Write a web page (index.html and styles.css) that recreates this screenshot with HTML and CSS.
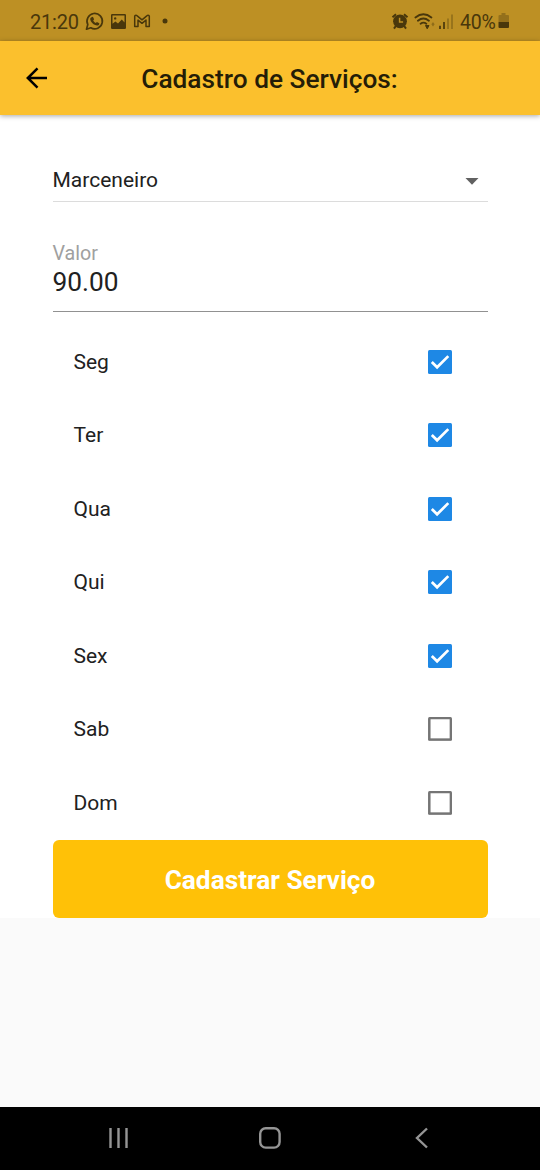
FILE: index.html
```html
<!DOCTYPE html>
<html lang="pt-BR">
<head>
<meta charset="utf-8">
<title>Cadastro de Serviços</title>
<link rel="stylesheet" href="styles.css">
</head>
<body>
<div class="status">
  <span class="clock">21:20</span>
  <svg class="notifications" width="90" height="20" viewBox="84 11 90 20" fill="none" stroke="currentColor">
    <path d="M86.500 29.200l1.300-4.600a7.700 7.700 0 1 1 3 3.200z" stroke-width="1.700" stroke-linejoin="round"/>
    <path d="M91.600 17.200l1.300-.4 1.200 2.500-.9 1.200c.6 1.200 1.400 2 2.600 2.600l1.100-1 2.400 1.200c.2 1.400-1 2.300-2.100 2.300-3.400-.3-6.800-3.700-7-6.600 0-.8.6-1.500 1.400-1.800z" fill="currentColor" stroke="none"/>
    <path fill-rule="evenodd" d="M112.200 14h12.600q1.200 0 1.200 1.200v12.600q0 1.200-1.200 1.200h-12.600q-1.200 0-1.200-1.200V15.200q0-1.200 1.200-1.200zM112.500 15.500v8.300l2.900-2.400 2.600 2 3.800-3.900 2.700 3v-7zM115.200 17.200a1.200 1.200 0 1 1 0 2.400 1.200 1.200 0 0 1 0-2.400z" fill="currentColor" stroke="none"/>
    <path d="M134.700 16.300q0-1.100 1.200-1.100.7 0 1.300.6l4.800 4 4.800-4q.6-.6 1.300-.6 1.200 0 1.200 1.100v10.100h-3.300v-6.300l-4 3.200-4-3.200v6.300h-3.300z" stroke-width="1.500" stroke-linejoin="round"/>
    <circle cx="165" cy="21" r="2.500" fill="currentColor" stroke="none"/>
  </svg>
  <svg class="signals" width="64" height="22" viewBox="391 10 64 22" fill="none" stroke="currentColor">
    <circle cx="400" cy="21.300" r="6.900" fill="currentColor" stroke="none"/>
    <path d="M392.500 17.300l3.500-3M407.500 17.300l-3.500-3M395.800 26l-1.800 2.600M404.200 26l1.800 2.600" stroke-width="2"/>
    <path d="M399.600 17.800v4.200h3.500" stroke="#bd9024" stroke-width="1.500"/>
    <path d="M415.400 17.500q8-6.500 16 0M417.900 20.700q5.500-4.500 11 0M420.600 23.700q2.900-2.200 5.700 0" stroke-width="1.800" stroke-linecap="round"/>
    <path d="M425.500 25.500l3.500 0-1.800 3.300z" stroke-width="1" fill="currentColor"/>
    <path d="M433 22l1.600 2.300-1.600 2.300-1.600-2.300z" fill="currentColor" stroke="none" opacity=".4"/>
    <path d="M440 25.800v3.200M444 22v7" stroke-width="1.700"/>
    <path d="M448 18.500v10.500M452 14.500v14.500" stroke-width="1.500" opacity=".42"/>
  </svg>
  <span class="percent">40%</span>
  <svg class="battery" width="12" height="18" viewBox="0 0 12 18" fill="currentColor">
    <path opacity=".35" d="M3.500 1h4v2H10q1 0 1 1v6H.500V4q0-1 1-1h2z"/>
    <path d="M.500 10H11v5q0 1-1 1H1.500q-1 0-1-1z"/>
  </svg>
</div>
<header class="appbar">
  <svg class="back" width="22" height="22" viewBox="0 0 22 22" fill="none" stroke="#000" stroke-width="2.500"><path d="M21 11H2M11.500 1.300L1.800 11l9.700 9.700"/></svg>
  <h1>Cadastro de Serviços:</h1>
</header>
<main class="form">
  <div class="select"><span>Marceneiro</span><svg class="caret" width="14" height="7" viewBox="0 0 14 7"><path d="M.500 0h13L7 6.700z" fill="#616161"/></svg></div>
  <div class="field"><label>Valor</label><div class="value">90.00</div></div>
  <div class="days">
    <div class="day"><span>Seg</span><svg class="box checked" viewBox="0 0 24 24"><path d="M3.800 12l5.300 5.300L20.300 6.100"/></svg></div>
    <div class="day"><span>Ter</span><svg class="box checked" viewBox="0 0 24 24"><path d="M3.800 12l5.300 5.300L20.300 6.100"/></svg></div>
    <div class="day"><span>Qua</span><svg class="box checked" viewBox="0 0 24 24"><path d="M3.800 12l5.300 5.300L20.300 6.100"/></svg></div>
    <div class="day"><span>Qui</span><svg class="box checked" viewBox="0 0 24 24"><path d="M3.800 12l5.300 5.300L20.300 6.100"/></svg></div>
    <div class="day"><span>Sex</span><svg class="box checked" viewBox="0 0 24 24"><path d="M3.800 12l5.300 5.300L20.300 6.100"/></svg></div>
    <div class="day"><span>Sab</span><svg class="box empty" viewBox="0 0 24 24"><rect x="1.300" y="1" width="21.600" height="21.600"/></svg></div>
    <div class="day"><span>Dom</span><svg class="box empty" viewBox="0 0 24 24"><rect x="1.300" y="1" width="21.600" height="21.600"/></svg></div>
  </div>
  <button class="submit" type="button">Cadastrar Serviço</button>
</main>
<nav class="navbar">
  <svg width="22" height="22" viewBox="0 0 22 22"><path d="M2.500 1v20M10.500 1v20M18.500 1v20"/></svg>
  <svg width="22" height="22" viewBox="0 0 22 22"><rect x="1.200" y="1.200" width="19.400" height="19.400" rx="5.500"/></svg>
  <svg width="22" height="22" viewBox="0 0 22 22"><path d="M17 1.500L7 11l10 9.500"/></svg>
</nav>
</body>
</html>
```

FILE: styles.css
```css
* { box-sizing: border-box; }
body {
  margin: 0;
  width: 540px;
  height: 1170px;
  display: flex;
  flex-direction: column;
  overflow: hidden;
  background: #fafafa;
  color: #212121;
  font-family: Roboto, sans-serif;
}
svg { display: block; flex: none; }
.status {
  height: 41px;
  flex: none;
  display: flex;
  align-items: center;
  padding: 2px 30px 0 30px;
  background: #bd9024;
  color: #49370b;
  font-size: 20px;
}
.clock { width: 54px; letter-spacing: -0.2px; }
.notifications { margin-top: -1px; }
.signals { margin: -1px 5px 0 auto; }
.percent { width: 38px; margin-top: 1px; font-size: 19.5px; letter-spacing: -0.2px; }
.battery { margin-top: -1px; }
.appbar {
  height: 74px;
  flex: none;
  display: flex;
  align-items: center;
  padding-left: 26px;
  position: relative;
  background: #fbc02d;
  box-shadow: 0 1px 5px rgba(0, 0, 0, 0.35);
}
.back { margin-right: 48px; }
.appbar h1 {
  flex: 1;
  margin: 2px 97px 0 0;
  text-align: center;
  font-size: 26.25px;
  font-weight: 500;
  color: #251d07;
}
.form {
  height: 803px;
  flex: none;
  padding: 43px 52.5px 0;
  background: #fff;
}
.select {
  height: 44px;
  display: flex;
  align-items: center;
  justify-content: space-between;
  padding-right: 9px;
  border-bottom: 1px solid #dcdcdc;
  font-size: 21px;
}
.caret { margin-top: 3px; }
.field {
  height: 110px;
  padding-top: 39px;
  border-bottom: 1.3px solid #919191;
}
.field label {
  display: block;
  height: 25px;
  line-height: 25px;
  font-size: 19.7px;
  color: #a0a0a0;
}
.value { font-size: 26.25px; line-height: 33px; }
.days { padding: 13px 35.5px 0 21px; }
.day {
  height: 73.5px;
  display: flex;
  align-items: center;
  justify-content: space-between;
  font-size: 21px;
}
.box { width: 24px; height: 24px; border-radius: 1.5px; fill: none; }
.checked { background: #1e88e5; stroke: #fff; stroke-width: 2.7; }
.empty { stroke: #757575; stroke-width: 2.5; }
.submit {
  display: block;
  width: 100%;
  height: 78.5px;
  padding: 3px 0 0;
  border: 0;
  border-radius: 6px;
  background: #ffc107;
  color: #fff;
  font: 700 26.25px Roboto, sans-serif;
}
.navbar {
  height: 63px;
  margin-top: auto;
  flex: none;
  display: flex;
  align-items: center;
  justify-content: space-between;
  padding: 0 108px 2px;
  background: #000;
}
.navbar svg { fill: none; stroke: #959595; stroke-width: 2.4; }
```
